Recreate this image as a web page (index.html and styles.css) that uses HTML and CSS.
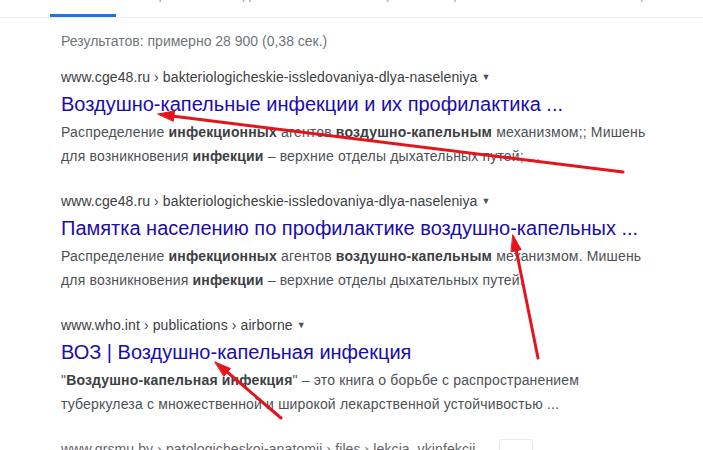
FILE: index.html
```html
<!DOCTYPE html>
<html lang="ru">
<head>
  <meta charset="UTF-8" />
  <title>Воздушно-капельные инфекции - Поиск</title>
  <link rel="stylesheet" href="styles.css">
</head>
<body>
  <div class="tabs">
    <span class="tab active">Все</span>
    <span class="tab">Картинки</span>
    <span class="tab">Видео</span>
    <span class="tab">Новости</span>
    <span class="tab">Карты</span>
    <span class="tab">Ещё</span>
    <span class="tab spacer">Настройки</span>
    <span class="tab">Инструменты</span>
  </div>

  <div class="results">
    <div class="stats">Результатов: примерно 28 900 (0,38 сек.)</div>

    <div class="result">
      <div class="cite">www.cge48.ru › bakteriologicheskie-issledovaniya-dlya-naseleniya <span class="caret">▼</span></div>
      <a class="title" href="#">Воздушно-капельные инфекции и их профилактика ...</a>
      <div class="snippet">Распределение <b>инфекционных</b> агентов <b>воздушно-капельным</b> механизмом;; Мишень<br>для возникновения <b>инфекции</b> – верхние отделы дыхательных путей; ...</div>
    </div>

    <div class="result">
      <div class="cite">www.cge48.ru › bakteriologicheskie-issledovaniya-dlya-naseleniya <span class="caret">▼</span></div>
      <a class="title" href="#">Памятка населению по профилактике воздушно-капельных ...</a>
      <div class="snippet">Распределение <b>инфекционных</b> агентов <b>воздушно-капельным</b> механизмом. Мишень<br>для возникновения <b>инфекции</b> – верхние отделы дыхательных путей.</div>
    </div>

    <div class="result">
      <div class="cite">www.who.int › publications › airborne <span class="caret">▼</span></div>
      <a class="title" href="#">ВОЗ | Воздушно-капельная инфекция</a>
      <div class="snippet">"<b>Воздушно-капельная инфекция</b>" – это книга о борьбе с распространением<br>туберкулеза с множественной и широкой лекарственной устойчивостью ...</div>
    </div>

    <div class="result">
      <div class="cite faded">www.grsmu.by › patologicheskoi-anatomii › files › lekcia_vkinfekcii <span class="box"></span></div>
    </div>
  </div>

  <!-- red arrows drawn over the screenshot -->
  <svg class="arrows" width="703" height="450" viewBox="0 0 703 450">
    <g stroke="#e5141b" stroke-width="3" stroke-linecap="round" fill="#e5141b">
      <line x1="623" y1="172" x2="172" y2="116" />
      <polygon points="158,114 174.5,111 173.3,121" stroke-width="1" />
      <line x1="538" y1="358" x2="516" y2="249" />
      <polygon points="513,235 521.1,249.7 511.3,251.7" stroke-width="1" />
      <line x1="281" y1="418" x2="226" y2="371" />
      <polygon points="215,362 230.4,368.5 224,376.1" stroke-width="1" />
    </g>
  </svg>
</body>
</html>
```

FILE: styles.css
```css
body {
  margin: 0;
  font-family: 'Liberation Sans', Arial, sans-serif;
  background: #fff;
  color: #4d5156;
  overflow: hidden;
  position: relative;
  height: 450px;
}

.tabs {
  display: flex;
  height: 17px;
  padding-left: 50px;
  border-bottom: 1px solid #ebebeb;
  overflow: hidden;
}

.tab {
  flex-shrink: 0;
  margin-top: -15px;
  margin-right: 28px;
  font-size: 13px;
  line-height: 20px;
  color: #9aa0a6;
  height: 32px;
  box-sizing: border-box;
}

.tab.active {
  width: 66px;
  text-align: center;
  border-bottom: 3px solid #1a73e8;
  color: #1a73e8;
}

.tab.spacer {
  margin-left: 120px;
}

.results {
  padding-left: 61px;
}

.stats {
  margin-top: 13px;
  font-size: 14px;
  line-height: 20px;
  color: #70757a;
  margin-bottom: 15px;
}

.result {
  margin-bottom: 22px;
}

.cite {
  font-size: 14px;
  line-height: 22px;
  letter-spacing: 0.1px;
  color: #3c4043;
}

.caret {
  font-size: 9px;
  margin-left: 0;
  color: #4d5156;
  position: relative;
  top: -2px;
}

.title {
  display: block;
  font-size: 20px;
  line-height: 28px;
  color: #1a0dab;
  text-decoration: none;
}

.snippet {
  margin-top: 2px;
  font-size: 14px;
  line-height: 24px;
  letter-spacing: 0.17px;
  color: #4d5156;
}

.snippet b {
  color: #3c4043;
}

.faded {
  color: #5f6368;
}

.box {
  display: inline-block;
  width: 32px;
  height: 20px;
  margin-left: 20px;
  border: 1px solid #e8e8e8;
  border-radius: 3px;
  vertical-align: middle;
}

.arrows {
  position: absolute;
  left: 0;
  top: 0;
  pointer-events: none;
}
```
